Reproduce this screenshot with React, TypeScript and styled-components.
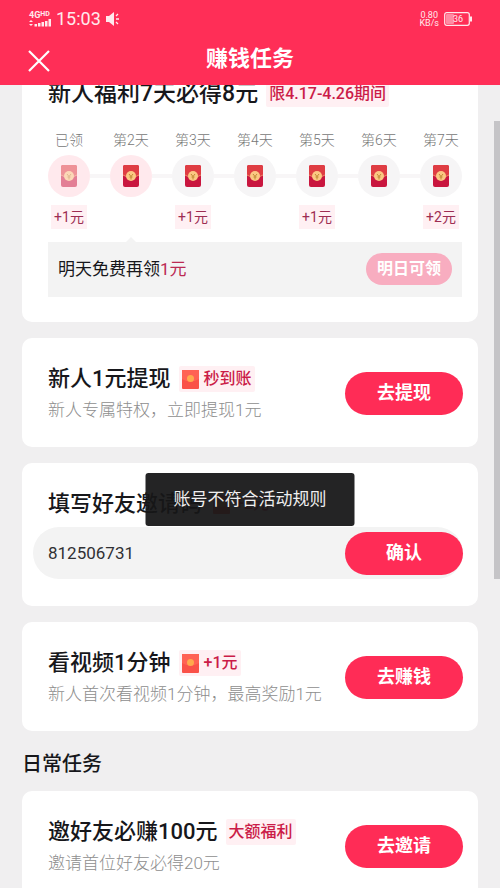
import React from "react";
import styled, { createGlobalStyle, css } from "styled-components";

const GlobalStyle = createGlobalStyle`
  * { box-sizing: border-box; }
  body {
    margin: 0;
    background: #f0eff0;
    color: #17171b;
    font-family: Roboto, "Noto Sans CJK SC", "Noto Sans", sans-serif;
  }
  button, input { font-family: inherit; }
  h1, h2, p, ul { margin: 0; padding: 0; }
`;

const Screen = styled.div`
  position: relative;
  display: flex;
  flex-direction: column;
  height: 100vh;
  overflow: hidden;
`;

const Header = styled.header`
  flex: none;
  background: #ff2e57;
  color: #fff;
`;

const StatusBar = styled.div`
  display: flex;
  align-items: center;
  justify-content: space-between;
  height: 38px;
  padding: 0 28px 0 29px;
  color: #ffe9ed;
`;

const StatusGroup = styled.div`
  display: flex;
  align-items: center;
  gap: 5px;
`;

const Signal = styled.div`
  display: flex;
  flex-direction: column;
  width: 22px;
  font-size: 9px;
  font-weight: 700;
  line-height: 8px;

  span { display: flex; }
  small { font-size: 7px; line-height: 6px; }
  svg { display: block; }
`;

const Clock = styled.time`
  font-size: 18px;
  line-height: 24px;
`;

const NetSpeed = styled.div`
  font-size: 9px;
  line-height: 8px;
  text-align: center;

  span { display: block; }
`;

const NavBar = styled.div`
  display: grid;
  grid-template-columns: 40px 1fr 40px;
  align-items: center;
  height: 47px;
  padding: 0 19px 9px;
`;

const CloseButton = styled.button`
  display: grid;
  place-items: center;
  height: 38px;
  padding: 8px 0 0;
  border: 0;
  background: none;
  color: #fff;
`;

const PageTitle = styled.h1`
  && { padding-top: 3px; }
  font-size: 22px;
  font-weight: 700;
  line-height: 30px;
  text-align: center;
`;

const Content = styled.main`
  flex: 1;
  min-height: 0;
  overflow: hidden;
  padding: 0 22px;
`;

const Card = styled.section<{ $first?: boolean }>`
  margin-bottom: 16px;
  padding: 23px 15px 22px 26px;
  border-radius: 10px;
  background: #fff;
  ${(p) => p.$first && css`
    padding: 0 16px 25px 26px;
    border-radius: 0 0 10px 10px;
  `}
`;

const TaskRow = styled.div`
  display: flex;
  align-items: center;
  justify-content: space-between;
`;

const TitleLine = styled.div<{ $clipped?: boolean }>`
  display: flex;
  align-items: center;
  gap: 8px;
  height: ${(p) => (p.$clipped ? 14 : 32)}px;
  padding-top: 4px;
  white-space: nowrap;
`;

const TaskTitle = styled.h2<{ $large?: boolean }>`
  font-size: ${(p) => (p.$large ? 23 : 22)}px;
  font-weight: 500;
  line-height: 32px;
`;

const Chip = styled.span`
  display: inline-flex;
  align-items: center;
  gap: 5px;
  height: 26px;
  padding: 0 3px;
  border-radius: 2px;
  background: #fff0f3;
  color: #cb1c48;
  font-size: 16px;
  font-weight: 500;
  line-height: 24px;
`;

const Subtitle = styled.p`
  && { padding-top: 3px; }
  color: #8e8e8e;
  font-size: 17px;
  font-weight: 300;
  line-height: 29px;
  white-space: nowrap;
`;

const ActionButton = styled.button`
  flex: none;
  width: 118px;
  height: 43px;
  padding: 0;
  border: 0;
  border-radius: 22px;
  background: #ff2c56;
  color: #fff;
  font-size: 18px;
  font-weight: 700;
  line-height: 24px;
`;

const Days = styled.ul`
  display: flex;
  justify-content: space-between;
  && { margin-top: 31px; }
  list-style: none;
`;

const Day = styled.li`
  position: relative;
  display: flex;
  flex-direction: column;
  align-items: center;
  width: 42px;
  height: 112px;
  white-space: nowrap;

  &:not(:last-child)::after {
    content: "";
    position: absolute;
    top: 44px;
    left: 100%;
    width: 20px;
    height: 4px;
    background: #f8f6f7;
  }
`;

const DayLabel = styled.span`
  color: #777;
  font-size: 14px;
  font-weight: 300;
  line-height: 20px;
`;

const DayCircle = styled.span<{ $tone: "done" | "next" | "later" }>`
  display: grid;
  place-items: center;
  width: 42px;
  height: 42px;
  margin: 5px 0 8px;
  border-radius: 50%;
  background: ${(p) => (p.$tone === "later" ? "#f6f5f6" : "#ffe9ed")};

  svg { opacity: ${(p) => (p.$tone === "done" ? 0.5 : 1)}; }
`;

const DayReward = styled.span`
  padding: 0 3px;
  background: #fff0f3;
  color: #9d2d52;
  font-size: 14px;
  line-height: 24px;
`;

const ClaimStrip = styled.div`
  position: relative;
  display: flex;
  align-items: center;
  justify-content: space-between;
  height: 55px;
  padding: 0 10px 2px;
  background: #f3f3f3;
  font-size: 17px;
  line-height: 26px;

  &::before {
    content: "";
    position: absolute;
    bottom: 100%;
    left: 78px;
    border: 5px solid transparent;
    border-top: 0;
    border-bottom-color: #f3f3f3;
  }
`;

const Amount = styled.span`
  color: #bb2a52;
`;

const TomorrowButton = styled.button`
  width: 86px;
  height: 32px;
  padding: 0;
  border: 0;
  border-radius: 16px;
  background: #f8adc0;
  color: #fff;
  font-size: 16px;
  font-weight: 700;
  line-height: 24px;
`;

const InviteForm = styled.form`
  display: flex;
  align-items: center;
  height: 52px;
  margin: 9px 0 5px -15px;
  border-radius: 26px;
  background: #f3f3f3;
`;

const InviteInput = styled.input`
  flex: 1;
  min-width: 0;
  height: 52px;
  padding: 0 15px;
  border: 0;
  outline: 0;
  background: none;
  color: #303033;
  font-size: 17px;
`;

const SectionTitle = styled.h2`
  && { margin-bottom: 10px; }
  font-size: 20px;
  font-weight: 500;
  line-height: 34px;
`;

const ScrollThumb = styled.div`
  position: absolute;
  top: 121px;
  right: 0;
  width: 6px;
  height: 458px;
  background: #c5c4c7;
`;

const Toast = styled.div`
  position: absolute;
  top: 473px;
  left: 50%;
  transform: translateX(-50%);
  padding: 13px 28px 14px;
  border-radius: 3px;
  background: rgba(22, 22, 23, 0.94);
  color: #efefef;
  font-size: 17px;
  line-height: 26px;
  white-space: nowrap;
`;

const Envelope = () => (
  <svg width="16" height="22" viewBox="0 0 16 22" aria-hidden="true">
    <rect width="16" height="22" rx="2" fill="#c9163f" />
    <path d="M0 10V2a2 2 0 0 1 2-2h12a2 2 0 0 1 2 2v8q-8 5-16 0z" fill="#df3d43" />
    <path d="M0 10q8 5 16 0" fill="none" stroke="#f08a65" strokeWidth="1" />
    <circle cx="8" cy="11" r="5" fill="#fbc883" />
    <path d="M6 9 8 11.500 10 9M8 11.500v3M6.500 12h3" fill="none" stroke="#c08a35" strokeWidth="1" />
  </svg>
);

const SmallEnvelope = () => (
  <svg width="17" height="19" viewBox="0 0 17 19" aria-hidden="true">
    <rect width="17" height="19" rx="1" fill="#fa5148" />
    <path d="M0 0h17v9q-8.500 5-17 0z" fill="#ff6254" />
    <circle cx="8.500" cy="8.500" r="3.500" fill="#ffa94d" />
  </svg>
);

type DayData = { label: string; tone: "done" | "next" | "later"; reward?: string };

const days: DayData[] = [
  { label: "已领", tone: "done", reward: "+1元" },
  { label: "第2天", tone: "next" },
  { label: "第3天", tone: "later", reward: "+1元" },
  { label: "第4天", tone: "later" },
  { label: "第5天", tone: "later", reward: "+1元" },
  { label: "第6天", tone: "later" },
  { label: "第7天", tone: "later", reward: "+2元" },
];

type TaskProps = { title: string; chip: string; envelope?: boolean; detail: string; action: string };

const TaskCard = ({ title, chip, envelope, detail, action }: TaskProps) => (
  <Card>
    <TaskRow>
      <div>
        <TitleLine>
          <TaskTitle>{title}</TaskTitle>
          <Chip>
            {envelope && <SmallEnvelope />}
            {chip}
          </Chip>
        </TitleLine>
        <Subtitle>{detail}</Subtitle>
      </div>
      <ActionButton type="button">{action}</ActionButton>
    </TaskRow>
  </Card>
);

export default function App() {
  return (
    <Screen lang="zh-CN">
      <GlobalStyle />
      <Header>
        <StatusBar>
          <StatusGroup>
            <Signal>
              <span>4G<small>HD</small></span>
              <svg width="22" height="8" viewBox="0 0 22 8" aria-hidden="true" fill="currentColor">
                <path d="m0 3 2-2 2 2zM0 5h4L2 7zM5.500 5h2.500v2.500H5.500zM9 4h2.500v3.500H9zM12.500 3H15v4.500h-2.500zM16 2h2.500v5.500H16zM19.500 0H22v7.500h-2.500z" />
              </svg>
            </Signal>
            <Clock>15:03</Clock>
            <svg width="15" height="14" viewBox="0 0 15 14" aria-hidden="true">
              <path d="M0 4h3l5-4v14l-5-4H0z" fill="currentColor" />
              <path d="m10 4 2-2M10 7h3M10 10l2 2" stroke="currentColor" strokeWidth="1.300" />
            </svg>
          </StatusGroup>
          <StatusGroup>
            <NetSpeed>
              <span>0.80</span>
              <span>KB/s</span>
            </NetSpeed>
            <svg width="28" height="14" viewBox="0 0 28 14" role="img" aria-label="36%">
              <rect x="0.700" y="0.700" width="24.600" height="12.600" rx="2" fill="none" stroke="currentColor" strokeWidth="1.200" />
              <rect x="2" y="2" width="8" height="10" rx="1" fill="#ff8ba3" />
              <path d="M26 4.500h2v5h-2z" fill="currentColor" />
              <text x="14" y="10" fontSize="9" textAnchor="middle" fill="currentColor">36</text>
            </svg>
          </StatusGroup>
        </StatusBar>
        <NavBar>
          <CloseButton type="button" aria-label="关闭">
            <svg width="22" height="22" viewBox="0 0 22 22" aria-hidden="true">
              <path d="m1 1 20 20M21 1 1 21" stroke="currentColor" strokeWidth="2.200" />
            </svg>
          </CloseButton>
          <PageTitle>赚钱任务</PageTitle>
        </NavBar>
      </Header>

      <Content>
        <Card $first>
          <TitleLine $clipped>
            <TaskTitle $large>新人福利7天必得8元</TaskTitle>
            <Chip>限4.17-4.26期间</Chip>
          </TitleLine>
          <Days>
            {days.map((day) => (
              <Day key={day.label}>
                <DayLabel>{day.label}</DayLabel>
                <DayCircle $tone={day.tone}>
                  <Envelope />
                </DayCircle>
                {day.reward && <DayReward>{day.reward}</DayReward>}
              </Day>
            ))}
          </Days>
          <ClaimStrip>
            <span>
              明天免费再领<Amount>1元</Amount>
            </span>
            <TomorrowButton type="button">明日可领</TomorrowButton>
          </ClaimStrip>
        </Card>

        <TaskCard title="新人1元提现" chip="秒到账" envelope detail="新人专属特权，立即提现1元" action="去提现" />

        <Card>
          <TitleLine>
            <TaskTitle as="label" htmlFor="invite-code">填写好友邀请码</TaskTitle>
            <Chip>
              <SmallEnvelope />
              +2元
            </Chip>
          </TitleLine>
          <InviteForm onSubmit={(event) => event.preventDefault()}>
            <InviteInput id="invite-code" type="text" inputMode="numeric" defaultValue="812506731" />
            <ActionButton type="submit">确认</ActionButton>
          </InviteForm>
        </Card>

        <TaskCard title="看视频1分钟" chip="+1元" envelope detail="新人首次看视频1分钟，最高奖励1元" action="去赚钱" />

        <SectionTitle>日常任务</SectionTitle>

        <TaskCard title="邀好友必赚100元" chip="大额福利" detail="邀请首位好友必得20元" action="去邀请" />
      </Content>

      <ScrollThumb />
      <Toast role="status">账号不符合活动规则</Toast>
    </Screen>
  );
}
